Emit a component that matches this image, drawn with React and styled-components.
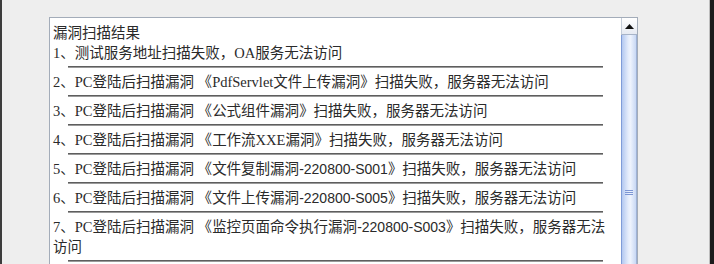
import React from 'react';
import styled, { createGlobalStyle } from 'styled-components';

const GlobalStyle = createGlobalStyle`
  html, body {
    margin: 0;
    padding: 0;
    background: #eeeeee;
    overflow: hidden;
  }
`;

const items = [
  { pre: '1、测试服务地址扫描失败，OA服务无法访问', plain: true },
  { pre: '2、PC登陆后扫描漏洞 《', name: 'PdfServlet文件上传漏洞', post: '》扫描失败，服务器无法访问' },
  { pre: '3、PC登陆后扫描漏洞 《', name: '公式组件漏洞', post: '》扫描失败，服务器无法访问' },
  { pre: '4、PC登陆后扫描漏洞 《', name: '工作流XXE漏洞', post: '》扫描失败，服务器无法访问' },
  { pre: '5、PC登陆后扫描漏洞 《', name: '文件复制漏洞', code: '-220800-S001', post: '》扫描失败，服务器无法访问' },
  { pre: '6、PC登陆后扫描漏洞 《', name: '文件上传漏洞', code: '-220800-S005', post: '》扫描失败，服务器无法访问' },
  { pre: '7、PC登陆后扫描漏洞 《', name: '监控页面命令执行漏洞', code: '-220800-S003', post: '》扫描失败，服务器无法访问' },
];

const App = () => {
  return (
    <>
      <GlobalStyle />
      <Screen>
        <LeftEdge />
        <Stage>
          <Panel>
            <Content>
              <Title>漏洞扫描结果</Title>
              {items.map((it, i) => (
                <div key={i}>
                  <Line>
                    {it.pre}
                    {it.name}
                    {it.code && <Code>{it.code}</Code>}
                    {it.post}
                  </Line>
                  <Rule />
                </div>
              ))}
            </Content>
            <ScrollBar>
              <ArrowButton>
                <svg width="9" height="5" viewBox="0 0 9 5">
                  <polygon points="0,5 9,5 4.5,0" fill="#111" />
                </svg>
              </ArrowButton>
              <Track>
                <Thumb>
                  <Grip>
                    <span />
                    <span />
                    <span />
                  </Grip>
                </Thumb>
              </Track>
            </ScrollBar>
          </Panel>
        </Stage>
        <RightEdge />
      </Screen>
    </>
  );
};

export default App;

const Screen = styled.div`
  display: flex;
  width: 714px;
  height: 264px;
  overflow: hidden;
  background: #eeeeee;
`;

const LeftEdge = styled.div`
  width: 2px;
  background: #3c3c3c;
`;

const RightEdge = styled.div`
  width: 4px;
  border-left: 1px solid #bdbdbd;
  background: #1c1c1c;
`;

const Stage = styled.div`
  flex: 1;
  padding: 17px 0 0 47px;
`;

const Panel = styled.div`
  width: 587px;
  height: 380px;
  display: flex;
  border: 1px solid #a3acb9;
  background: #ffffff;
`;

const Content = styled.div`
  flex: 1;
  padding: 5px 8px 0 3px;
  font-family: "Liberation Serif", "Noto Sans CJK SC", serif;
  font-size: 14.5px;
  line-height: 20px;
  color: #2a2a2a;
`;

const Title = styled.div``;

const Line = styled.div``;

const Code = styled.span`
  font-family: "Liberation Sans", "Noto Sans CJK SC", sans-serif;
  font-size: 14px;
`;

const Rule = styled.div`
  margin: 3px 10px 4px 15px;
  height: 0;
  border-top: 1px solid #5e5e5e;
  border-bottom: 1px solid #9a9a9a;
`;

const ScrollBar = styled.div`
  width: 16px;
  display: flex;
  flex-direction: column;
  background: #eeeeee;
`;

const ArrowButton = styled.div`
  height: 16px;
  display: flex;
  align-items: center;
  justify-content: center;
  border-bottom: 1px solid #a8b4c8;
  border-left: 1px solid #c4ccd8;
  background: linear-gradient(to bottom, #ffffff, #e6eaf2);
`;

const Track = styled.div`
  flex: 1;
`;

const Thumb = styled.div`
  height: 314px;
  display: flex;
  align-items: center;
  justify-content: center;
  border-left: 1px solid #7f9cd8;
  border-right: 1px solid #9fb2d6;
  background: linear-gradient(to right, #b3c8f0 0%, #e4ecfb 45%, #eef3fd 60%, #c8d8f4 100%);
`;

const Grip = styled.div`
  display: flex;
  flex-direction: column;
  gap: 1px;

  span {
    display: block;
    width: 8px;
    height: 1px;
    background: #7d96d4;
  }
`;
